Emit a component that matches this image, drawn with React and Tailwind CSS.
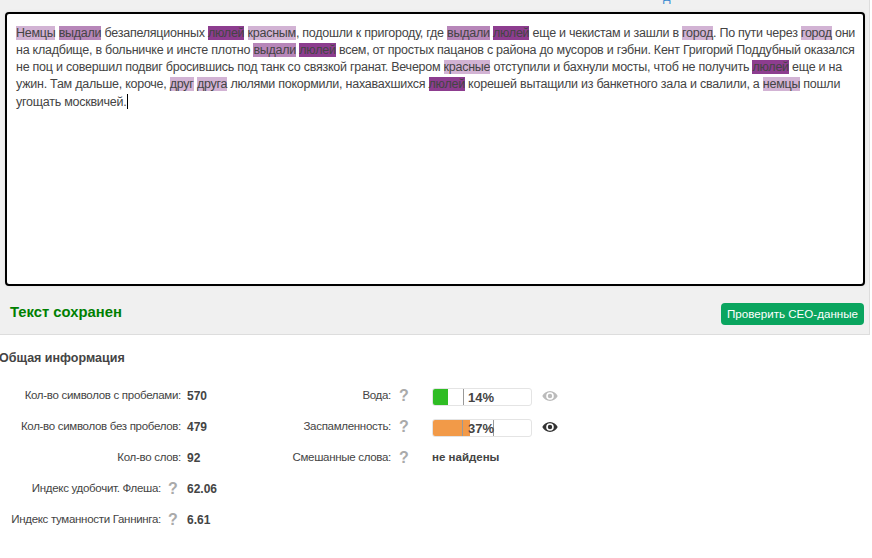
const F = "font-['Liberation_Sans',sans-serif]";
const L = ({ c, children }) => <span className={c === 1 ? "bg-[#d2b3d4]" : c === 2 ? "bg-[#b786b9]" : "bg-[#8d3d8f]"}>{children}</span>;
const Q = () => <span className="w-[16px] text-center text-[16px] font-bold leading-[16px] text-[#aaa]">?</span>;
const Eye = ({ color }) => (
  <svg width="16" height="12" viewBox="0 0 16 12"><path fill={color} d="M8 1C4.5 1 1.8 3.2 0.3 6 1.8 8.8 4.5 11 8 11s6.2-2.2 7.7-5C14.2 3.2 11.5 1 8 1zm0 8.8A3.8 3.8 0 1 1 8 2.2a3.8 3.8 0 0 1 0 7.6zM8 3.8A2.2 2.2 0 1 0 8 8.200a2.2 2.2 0 0 0 0-4.400z" /></svg>
);
const Row = ({ label, q, value }) => (
  <div className="flex h-[31px] items-center">
    <div className="flex w-[181px] items-center justify-end whitespace-nowrap">
      <span className="text-[11.500px] tracking-[-0.3px]">{label}</span>
      {q && <span className="ml-[4px] flex"><Q /></span>}
    </div>
    <b className="ml-[6px] text-[#444]">{value}</b>
  </div>
);
const Bar = ({ w, c, m1, m2, pct, eye }) => (
  <div className="mt-[3px] flex items-center">
    <div className="relative h-[18px] w-[100px] overflow-hidden rounded-[3px] border border-[#e4e4e4] bg-white">
      <div className="h-full" style={{ width: w, background: c }} />
      <div className="absolute top-0 h-full w-px bg-[#999]" style={{ left: m1 }} />
      <div className="absolute top-0 h-full w-px bg-[#999]" style={{ left: m2 }} />
      <b className="absolute left-[35px] top-0 text-[13px] leading-[18px] text-[#444]">{pct}</b>
    </div>
    <span className="mb-[3px] ml-[10px] flex"><Eye color={eye} /></span>
  </div>
);
const R2 = ({ label, children }) => (
  <div className="flex h-[31px] items-center">
    <div className="flex w-[162px] items-center justify-end whitespace-nowrap">
      <span className="text-[11.500px] tracking-[-0.3px]">{label}</span>
      <span className="ml-[5px] flex"><Q /></span>
    </div>
    <div className="ml-[20px]">{children}</div>
  </div>
);
export default function App() {
  return (
    <div className={`${F} h-[558px] w-[872px] overflow-hidden bg-white text-[12px] text-[#444]`}>
      <div className="relative h-[335px] w-[870px] overflow-hidden border-b border-r border-[#ddd] bg-[#f0f0f0] pl-[5px] pt-[12px]">
        <div className="absolute left-[663px] top-[-13px] text-[13px] text-[#3a8ad0]">д</div>
        <div className="h-[274px] w-[860px] rounded-[4px] border-2 border-black bg-white pl-[9px] pt-[10.500px] text-[12.500px] leading-[17.330px] tracking-[-0.25px] text-[#444] shadow-[0_0_3px_#ddd]">
          <div className="whitespace-nowrap"><L c={1}>Немцы</L> <L c={2}>выдали</L> безапеляционных <L c={3}>люлей</L> <L c={1}>красным</L>, подошли к пригороду, где <L c={2}>выдали</L> <L c={3}>люлей</L> еще и чекистам и зашли в <L c={1}>город</L>. По пути через <L c={1}>город</L> они</div>
          <div className="whitespace-nowrap">на кладбище, в больничке и инсте плотно <L c={2}>выдали</L> <L c={3}>люлей</L> всем, от простых пацанов с района до мусоров и гэбни. Кент Григорий Поддубный оказался</div>
          <div className="whitespace-nowrap">не поц и совершил подвиг бросившись под танк со связкой гранат. Вечером <L c={1}>красные</L> отступили и бахнули мосты, чтоб не получить <L c={3}>люлей</L> еще и на</div>
          <div className="whitespace-nowrap">ужин. Там дальше, короче, <L c={1}>друг</L> <L c={1}>друга</L> люлями покормили, нахавахшихся <L c={3}>люлей</L> корешей вытащили из банкетного зала и свалили, а <L c={1}>немцы</L> пошли</div>
          <div className="whitespace-nowrap">угощать москвичей.<span className="ml-px inline-block h-[15px] w-px bg-black align-text-bottom" /></div>
        </div>
        <div className="flex items-center justify-between pr-[5px] pt-[15px]">
          <b className="mb-[4px] ml-[5px] text-[14.800px] text-[#008000]">Текст сохранен</b>
          <span className="flex h-[22px] w-[143px] items-center justify-center rounded-[4px] bg-[#0aa55f] text-[11.600px] text-white">Проверить СЕО-данные</span>
        </div>
      </div>
      <div className="pt-[14px]">
        <h2 className="-ml-px h-[22px] text-[12.500px] font-bold leading-[18px] text-[#444]">Общая информация</h2>
        <div className="flex pt-[9px]">
          <div className="flex w-[250px] flex-col">
            <Row label="Кол-во символов с пробелами:" value="570" />
            <Row label="Кол-во символов без пробелов:" value="479" />
            <Row label="Кол-во слов:" value="92" />
            <Row label="Индекс удобочит. Флеша:" q value="62.06" />
            <Row label="Индекс туманности Ганнинга:" q value="6.61" />
          </div>
          <div className="flex flex-col">
            <R2 label="Вода:"><Bar w="15px" c="#2fbd24" m1="30px" m2="30px" pct="14%" eye="#bbb" /></R2>
            <R2 label="Заспамленность:"><Bar w="37px" c="#f29a48" m1="29px" m2="60px" pct="37%" eye="#333" /></R2>
            <R2 label="Смешанные слова:"><b className="text-[11.500px] text-[#444]">не найдены</b></R2>
          </div>
        </div>
      </div>
    </div>
  );
}
